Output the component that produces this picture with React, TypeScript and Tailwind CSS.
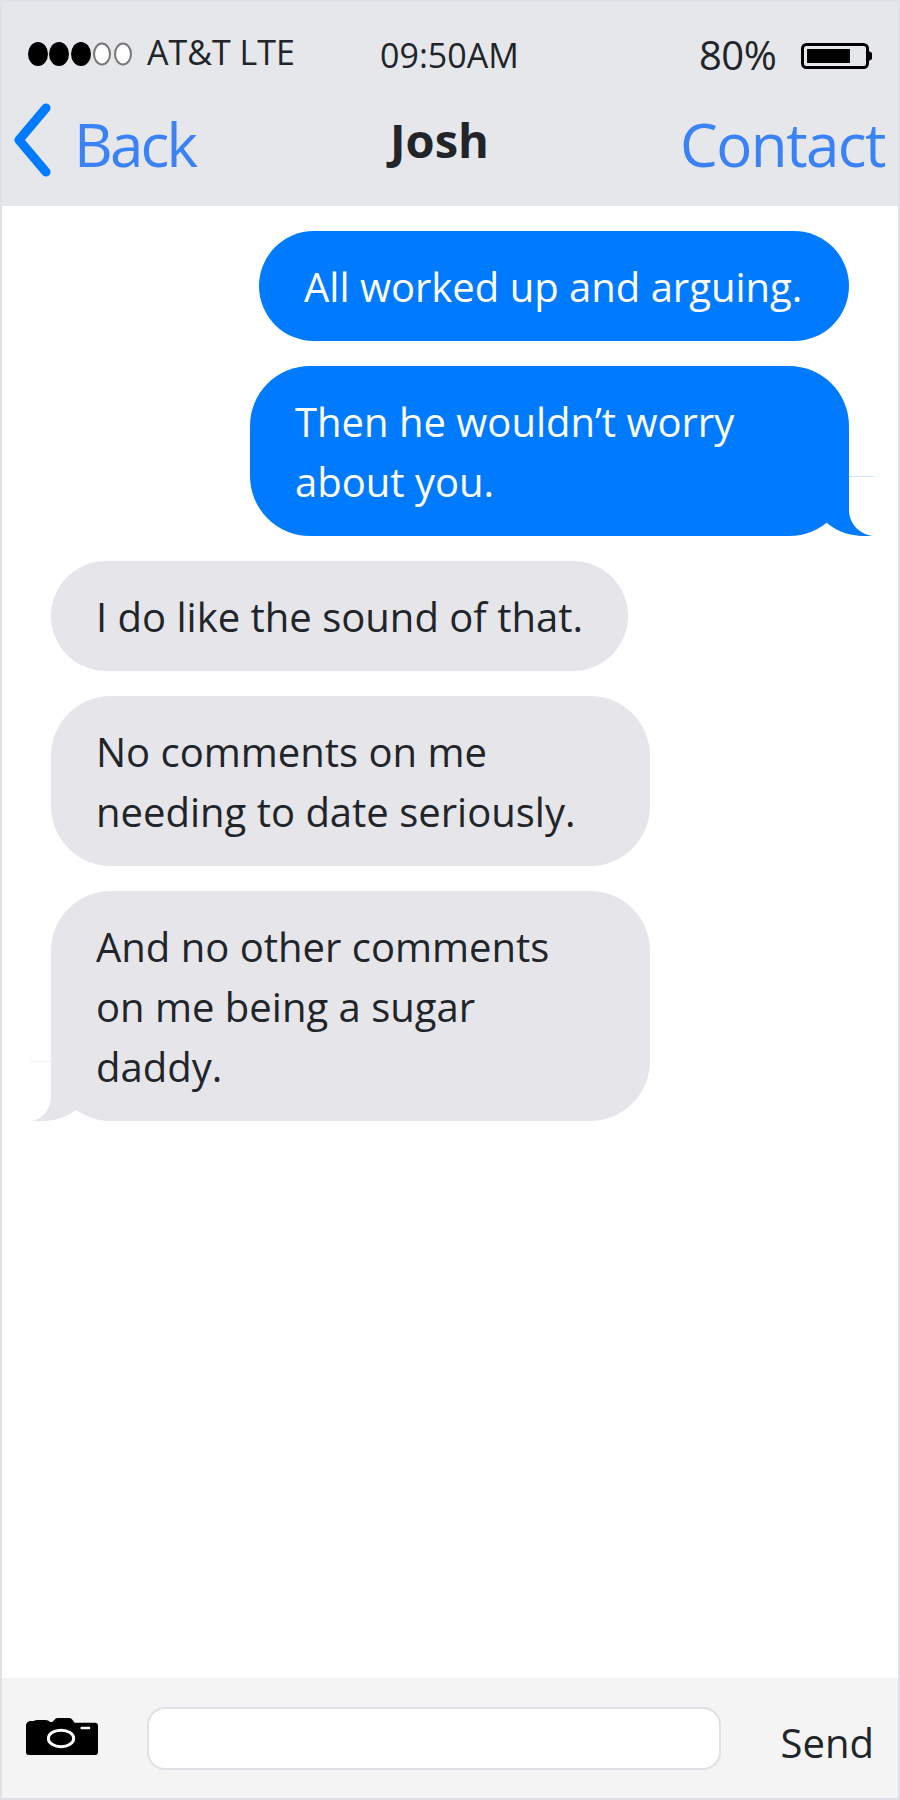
import { Fragment } from 'react'

interface Message {
  lines: string[]
  width: string
  tail?: boolean
}

const SENT: Message[] = [
  { lines: ['All worked up and arguing.'], width: 'w-[590px]' },
  { lines: ['Then he wouldn’t worry', 'about you.'], width: 'w-[599px]', tail: true },
]

const RECEIVED: Message[] = [
  { lines: ['I do like the sound of that.'], width: 'w-[577px]' },
  { lines: ['No comments on me', 'needing to date seriously.'], width: 'w-[599px]' },
  { lines: ['And no other comments', 'on me being a sugar', 'daddy.'], width: 'w-[599px]', tail: true },
]

function Lines({ lines }: { lines: string[] }) {
  return (
    <>
      {lines.map((line, i) => (
        <Fragment key={i}>
          {i > 0 && <br />}
          {line}
        </Fragment>
      ))}
    </>
  )
}

function SentBubble({ message }: { message: Message }) {
  return (
    <div className={`relative rounded-[60px] bg-[#007bff] px-[45px] pt-[26px] pb-[24px] whitespace-nowrap text-white ${message.width}`}>
      <Lines lines={message.lines} />
      {message.tail && (
        <svg className="absolute right-[-25px] bottom-0" width="74" height="60" viewBox="0 0 74 60">
          <rect x="49" y="0" width="25" height="1" fill="#cfe5ff" />
          <path d="M49 0 L49 34 C49 48 60 59 74 60 C60 60.5 42 60 27 47 L16 30 Z" fill="#007bff" />
        </svg>
      )}
    </div>
  )
}

function ReceivedBubble({ message }: { message: Message }) {
  return (
    <div className={`relative rounded-[60px] bg-[#e5e5ea] px-[45px] pt-[26px] pb-[24px] whitespace-nowrap text-[#212529] ${message.width}`}>
      <Lines lines={message.lines} />
      {message.tail && (
        <svg className="absolute bottom-0 left-[-21px]" width="74" height="60" viewBox="0 0 74 60">
          <rect x="0" y="0" width="21" height="1" fill="#f4f4f6" />
          <path d="M21 0 L21 34 C21 48 13 59 0 60 C16 60.5 32 60 46 49 L58 30 Z" fill="#e5e5ea" />
        </svg>
      )}
    </div>
  )
}

export default function App() {
  return (
    <div className="flex h-[1800px] w-[900px] flex-col border-2 border-[#dee2e6] bg-white font-['Open_Sans',sans-serif] text-[40px] leading-[60px] text-[#212529]">
      <header className="h-[204px] bg-[#e5e7eb]">
        <div className="flex h-[100px] items-center pr-[24px] pl-[25px]">
          <svg className="mt-[4px] blur-[0.6px]" width="108" height="26" viewBox="0 0 108 26">
            <ellipse cx="11" cy="13" rx="10" ry="12" fill="#000" />
            <ellipse cx="32" cy="13" rx="10" ry="12" fill="#000" />
            <ellipse cx="54" cy="13" rx="10" ry="12" fill="#000" />
            <ellipse cx="75" cy="13" rx="8" ry="10.5" fill="#fff" stroke="#777" strokeWidth="2" />
            <ellipse cx="96" cy="13" rx="8" ry="10.5" fill="#fff" stroke="#777" strokeWidth="2" />
          </svg>
          <span className="ml-[12px] w-[233px] text-[34px]">AT&amp;T LTE</span>
          <span className="mt-[6px] w-[319px] text-[34px]">09:50AM</span>
          <span className="mt-[6px] w-[102px] tracking-[-0.5px]">80%</span>
          <svg className="mt-[8px]" width="72" height="26" viewBox="0 0 72 26">
            <rect x="1.5" y="1.5" width="65" height="23" rx="4" fill="none" stroke="#000" strokeWidth="3" />
            <rect x="6" y="6" width="43" height="14" fill="#000" />
            <path d="M68 8 L71 10 L71 16 L68 18 Z" fill="#000" />
          </svg>
        </div>
        <div className="flex h-[84px] items-center">
          <svg className="mt-[-8px] ml-[12px]" width="40" height="74" viewBox="0 0 40 74">
            <path d="M32 5 L5 37 L32 69" fill="none" stroke="#007bff" strokeWidth="9" strokeLinecap="round" strokeLinejoin="round" />
          </svg>
          <span className="ml-[20px] w-[316px] text-[60px] leading-[84px] tracking-[-2.8px] text-[#3b82f6]">Back</span>
          <span className="pb-[8px] text-[47px] leading-[84px] font-bold">Josh</span>
          <span className="mr-[13px] ml-auto text-[60px] leading-[84px] tracking-[-1.5px] text-[#3b82f6]">Contact</span>
        </div>
      </header>

      <main className="flex flex-1 flex-col gap-[25px] pt-[25px]">
        <div className="flex flex-col items-end gap-[25px] pr-[49px]">
          {SENT.map((m, i) => (
            <SentBubble key={i} message={m} />
          ))}
        </div>
        <div className="flex flex-col items-start gap-[25px] pl-[49px]">
          {RECEIVED.map((m, i) => (
            <ReceivedBubble key={i} message={m} />
          ))}
        </div>
      </main>

      <footer className="flex h-[120px] items-center bg-[#f4f4f5] pr-[24px] pl-[24px]">
        <svg className="mt-[-4px]" width="72" height="37" viewBox="0 0 74 38" preserveAspectRatio="none">
          <path d="M3 38 Q0 38 0 35 L0 8 Q0 4 4 3 L8 3 Q9 2 12 2 L20 2 Q23 2 25 4 L27 4 L30 1 Q31 0 33 0 L44 0 Q46 0 47 1 L50 5 L71 5 Q74 5 74 8 L74 35 Q74 38 71 38 Z" fill="#000" />
          <ellipse cx="36" cy="21" rx="13" ry="8.5" fill="none" stroke="#fff" strokeWidth="3" />
          <rect x="56" y="9" width="10" height="2.5" rx="1" fill="#fff" />
        </svg>
        <div className="ml-[49px] h-[63px] w-[574px] rounded-[18px] border-2 border-[#dee2e6] bg-white" />
        <span className="mt-[10px] ml-auto">Send</span>
      </footer>
    </div>
  )
}
